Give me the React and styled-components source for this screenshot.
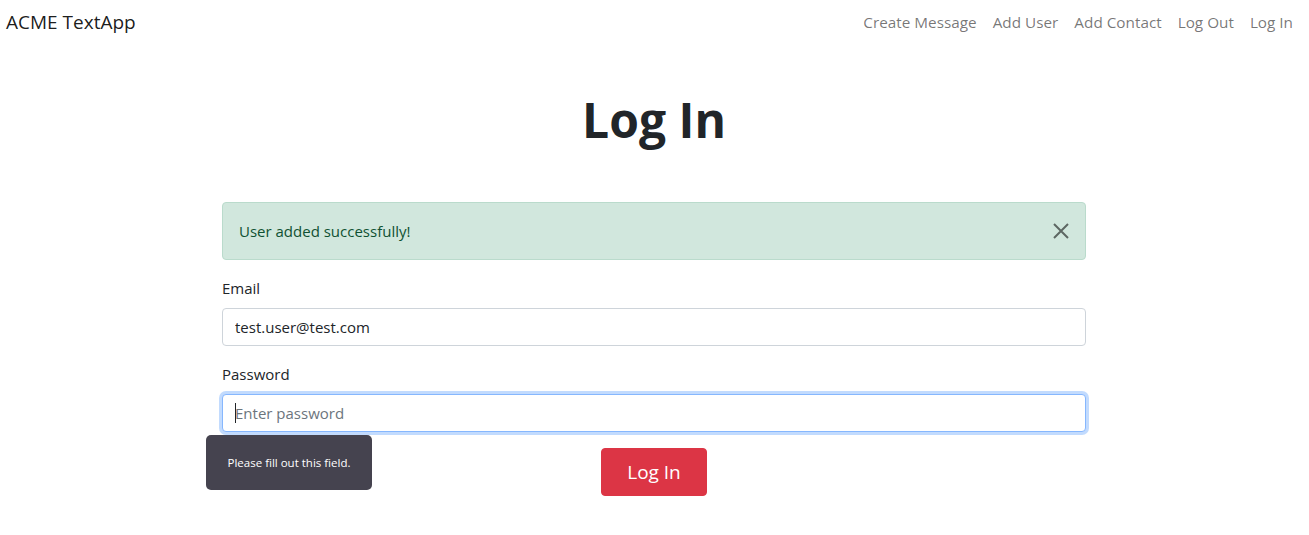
import React from "react";
import styled, { createGlobalStyle } from "styled-components";

const Global = createGlobalStyle`
  * { box-sizing: border-box; }
  body {
    margin: 0;
    font-family: "Open Sans", "Noto Sans", sans-serif;
    color: #212529;
    background: #fff;
    font-size: 16px;
    line-height: 1.5;
  }
`;

const Nav = styled.nav`
  height: 44px;
  display: flex;
  align-items: center;
  justify-content: space-between;
  padding: 0 15px 0 6px;
`;

const Brand = styled.a`
  font-size: 19px;
  color: rgba(0, 0, 0, 0.9);
  text-decoration: none;
`;

const NavList = styled.div`
  display: flex;
  align-items: center;
`;

const NavLink = styled.a`
  font-size: 15.3px;
  color: rgba(0, 0, 0, 0.55);
  text-decoration: none;
  padding: 0 8px;
  &:last-child { padding-right: 0; }
`;

const Page = styled.div`
  padding-right: 1px;
`;

const Main = styled.main`
  width: 864px;
  margin: 0 auto;
`;

const Title = styled.h1`
  margin: 47px 0 53px;
  font-size: 48px;
  font-weight: 700;
  line-height: 1.2;
  text-align: center;
`;

const Alert = styled.div`
  display: flex;
  align-items: center;
  justify-content: space-between;
  padding: 17px 16px;
  background: #d1e7dd;
  border: 1px solid #badbcc;
  border-radius: 4px;
  color: #0f5132;
  margin-bottom: 16px;
  font-size: 15px;
`;

const Close = styled.button`
  border: 0;
  background: transparent;
  padding: 0;
  width: 16px;
  height: 16px;
  display: flex;
  opacity: 0.55;
  cursor: pointer;
`;

const Field = styled.div`
  position: relative;
  margin-bottom: 16px;
`;

const Label = styled.label`
  display: block;
  margin-bottom: 8px;
  font-size: 15px;
  line-height: 24px;
`;

const Input = styled.input`
  display: block;
  width: 100%;
  height: 38px;
  padding: 6px 12px;
  font-family: inherit;
  font-size: 15px;
  color: #212529;
  border: 1px solid ${(p) => (p.$focus ? "#86b7fe" : "#ced4da")};
  border-radius: 4px;
  outline: none;
  box-shadow: ${(p) => (p.$focus ? "0 0 0 3px rgba(13,110,253,0.25)" : "none")};
  &::placeholder { color: #6c757d; }
`;

const InputWrap = styled.div`
  position: relative;
`;

const Caret = styled.span`
  position: absolute;
  left: 13px;
  top: 9px;
  width: 1px;
  height: 20px;
  background: #212529;
`;

const Tooltip = styled.div`
  position: absolute;
  left: -16px;
  top: 73px;
  width: 166px;
  height: 55px;
  background: #45434f;
  color: #fff;
  border-radius: 5px;
  font-size: 11.5px;
  display: flex;
  align-items: center;
  justify-content: center;
  z-index: 2;
`;

const Actions = styled.div`
  display: flex;
  justify-content: center;
`;

const Button = styled.button`
  background: #dc3545;
  border: 1px solid #dc3545;
  color: #fff;
  font-family: inherit;
  font-size: 19px;
  line-height: 30px;
  padding: 8px 0;
  border-radius: 4px;
  width: 106px;
  cursor: pointer;
`;

export default function App() {
  return (
    <Page>
      <Global />
      <Nav>
        <Brand href="#">ACME TextApp</Brand>
        <NavList>
          <NavLink href="#">Create Message</NavLink>
          <NavLink href="#">Add User</NavLink>
          <NavLink href="#">Add Contact</NavLink>
          <NavLink href="#">Log Out</NavLink>
          <NavLink href="#">Log In</NavLink>
        </NavList>
      </Nav>
      <Main>
        <Title>Log In</Title>
        <Alert>
          <span>User added successfully!</span>
          <Close aria-label="Close">
            <svg width="16" height="16" viewBox="0 0 16 16">
              <path d="M1 1L15 15M15 1L1 15" stroke="#000" strokeWidth="2" />
            </svg>
          </Close>
        </Alert>
        <Field>
          <Label>Email</Label>
          <Input type="email" defaultValue="test.user@test.com" />
        </Field>
        <Field>
          <Label>Password</Label>
          <InputWrap>
            <Input type="password" placeholder="Enter password" $focus />
            <Caret />
          </InputWrap>
          <Tooltip>Please fill out this field.</Tooltip>
        </Field>
        <Actions>
          <Button>Log In</Button>
        </Actions>
      </Main>
    </Page>
  );
}
